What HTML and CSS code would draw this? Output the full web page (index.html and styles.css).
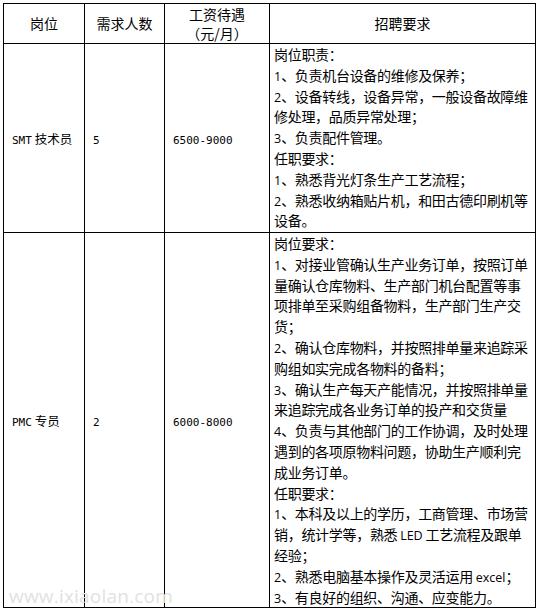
FILE: index.html
```html
<!DOCTYPE html>
<html lang="zh-CN">
<head>
<meta charset="utf-8">
<title>招聘</title>
<link rel="stylesheet" href="styles.css">
</head>
<body>
<div class="wrap">
<table class="jobs">
  <colgroup>
    <col class="c1"><col class="c2"><col class="c3"><col class="c4">
  </colgroup>
  <tr class="head">
    <th>岗位</th>
    <th>需求人数</th>
    <th>工资待遇<br>（元/月）</th>
    <th>招聘要求</th>
  </tr>
  <tr class="r1">
    <td class="side"><span class="m">SMT</span> 技术员</td>
    <td class="side"><span class="m">5</span></td>
    <td class="side"><span class="m">6500-9000</span></td>
    <td class="req">
      <div class="ln">岗位职责：</div>
      <div class="ln"><span class="n">1</span>、负责机台设备的维修及保养；</div>
      <div class="ln"><span class="n">2</span>、设备转线，设备异常，一般设备故障维</div>
      <div class="ln">修处理，品质异常处理；</div>
      <div class="ln"><span class="n">3</span>、负责配件管理。</div>
      <div class="ln">任职要求：</div>
      <div class="ln"><span class="n">1</span>、熟悉背光灯条生产工艺流程；</div>
      <div class="ln"><span class="n">2</span>、熟悉收纳箱贴片机，和田古德印刷机等</div>
      <div class="ln">设备。</div>
    </td>
  </tr>
  <tr class="r2">
    <td class="side"><span class="m">PMC</span> 专员</td>
    <td class="side"><span class="m">2</span></td>
    <td class="side"><span class="m">6000-8000</span></td>
    <td class="req">
      <div class="ln">岗位要求：</div>
      <div class="ln"><span class="n">1</span>、对接业管确认生产业务订单，按照订单</div>
      <div class="ln">量确认仓库物料、生产部门机台配置等事</div>
      <div class="ln">项排单至采购组备物料，生产部门生产交</div>
      <div class="ln">货；</div>
      <div class="ln"><span class="n">2</span>、确认仓库物料，并按照排单量来追踪采</div>
      <div class="ln">购组如实完成各物料的备料；</div>
      <div class="ln"><span class="n">3</span>、确认生产每天产能情况，并按照排单量</div>
      <div class="ln">来追踪完成各业务订单的投产和交货量</div>
      <div class="ln"><span class="n">4</span>、负责与其他部门的工作协调，及时处理</div>
      <div class="ln">遇到的各项原物料问题，协助生产顺利完</div>
      <div class="ln">成业务订单。</div>
      <div class="ln">任职要求：</div>
      <div class="ln"><span class="n">1</span>、本科及以上的学历，工商管理、市场营</div>
      <div class="ln">销，统计学等，熟悉 <span class="n">LED</span> 工艺流程及跟单</div>
      <div class="ln">经验；</div>
      <div class="ln"><span class="n">2</span>、熟悉电脑基本操作及灵活运用 <span class="n">excel</span>；</div>
      <div class="ln"><span class="n">3</span>、有良好的组织、沟通、应变能力。</div>
    </td>
  </tr>
</table>
<div class="watermark">www.ixiaolan.com</div>
</div>
</body>
</html>
```
FILE: styles.css
```css
html, body {
  margin: 0;
  padding: 0;
  background: #fff;
}
body {
  font-family: "Noto Sans CJK SC", "Noto Sans", sans-serif;
  color: #000;
}
.wrap {
  position: relative;
  padding: 3px 0 0 3px;
  width: 537px;
  height: 612px;
  box-sizing: border-box;
  overflow: hidden;
}
.jobs {
  border-collapse: collapse;
  table-layout: fixed;
  width: 532px;
}
.c1 { width: 81px; }
.c2 { width: 80px; }
.c3 { width: 105px; }
.c4 { width: 266px; }
.jobs th, .jobs td {
  border: 1px solid #000;
  padding: 0;
}
.head { height: 40px; }
.jobs .head th {
  font-weight: normal;
  font-size: 14px;
  line-height: 19px;
  text-align: center;
  vertical-align: middle;
}
.r1 { height: 189px; }
.r2 { height: 375px; }
.jobs .side {
  font-size: 12.5px;
  vertical-align: middle;
  padding-left: 8px;
  white-space: nowrap;
}
.m {
  font-family: "DejaVu Sans Mono", "Liberation Mono", monospace;
  font-size: 11px;
}
.jobs .req {
  font-size: 14px;
  letter-spacing: -0.3px;
  vertical-align: top;
  padding: 0 0 0 4px;
  white-space: nowrap;
}
.ln {
  height: 20.8px;
  line-height: 20.8px;
}
.n {
  font-family: "Open Sans", "Liberation Sans", sans-serif;
  font-size: 12.5px;
  line-height: 1;
  letter-spacing: 0;
}
.watermark {
  position: absolute;
  left: 9px;
  top: 583px;
  font-family: "Open Sans", "Liberation Sans", sans-serif;
  font-size: 19px;
  color: #e2e2e2;
  letter-spacing: 0.2px;
  pointer-events: none;
}
```
